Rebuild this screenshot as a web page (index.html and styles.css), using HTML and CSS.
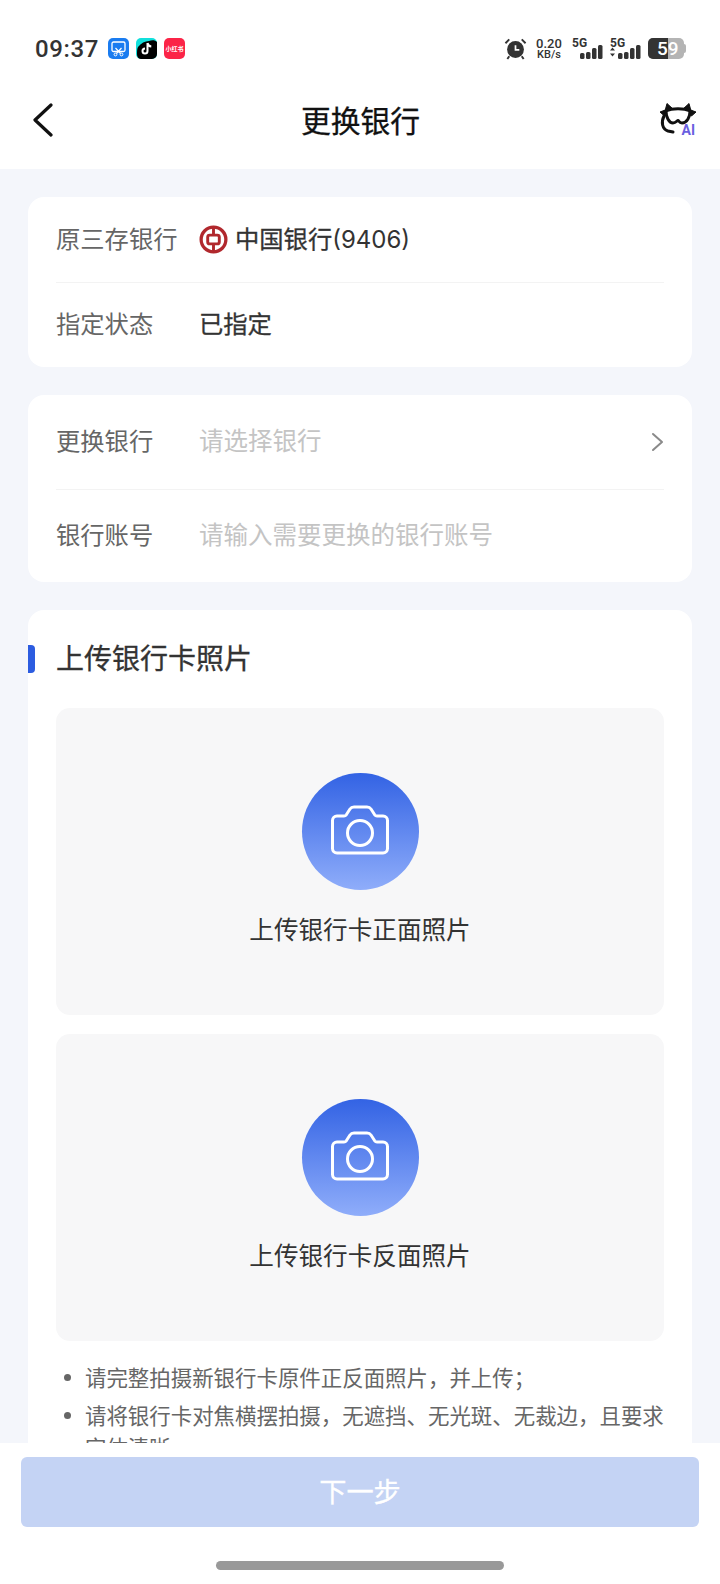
FILE: index.html
```html
<!DOCTYPE html>
<html lang="zh-CN">
<head>
    <meta charset="UTF-8">
    <meta name="viewport" content="width=device-width, initial-scale=1.0">
    <title>更换银行</title>
    <link rel="stylesheet" href="styles.css">
</head>
<body>
<div class="screen">
    <div class="top">
        <div class="status">
            <span class="time">09:37</span>
            <svg class="app" viewBox="0 0 21 21"><rect width="21" height="21" rx="5" fill="#1a7cf0"/><rect x="4" y="4" width="13" height="9.500" rx="1.500" fill="none" stroke="#fff" stroke-width="1.300"/><path d="M7.500 10l5.500 6M13.500 10l-5.500 6" stroke="#fff" stroke-width="1.200"/><circle cx="7.500" cy="16.500" r="1.400" fill="#1a7cf0" stroke="#fff"/><circle cx="13.500" cy="16.500" r="1.400" fill="#1a7cf0" stroke="#fff"/></svg>
            <svg class="app" viewBox="0 0 21 21"><rect width="21" height="21" rx="5" fill="#12e0dc"/><path d="M2 9C5 5 9 3 13 3c3-1 6-1 8 1v12a5 5 0 0 1-5 5H5c-3 0-4-3-4-5 0-3 0-5 1-7z" fill="#000"/><path d="M11.500 5v8a2.500 2.500 0 1 1-2.500-2.500M11.500 5c.3 2 1.700 3.300 3.800 3.500" fill="none" stroke="#fff" stroke-width="2"/></svg>
            <span class="app red">小红书</span>
            <span class="status-right">
                <svg class="alarm" viewBox="0 0 24 24"><circle cx="12" cy="13" r="8.800" fill="#333"/><path d="M12 8.500V13.500H16" fill="none" stroke="#fff" stroke-width="1.800"/><path d="M1.500 6.500L5.500 2.500M22.500 6.500L18.500 2.500M5.500 20L3.500 23M18.500 20L20.500 23" stroke="#333" stroke-width="2"/></svg>
                <span class="speed"><b>0.20</b><i>KB/s</i></span>
                <span class="sig"><em>5G</em>
                    <svg viewBox="0 0 31 14"><rect x="8" y="8" width="4.500" height="6" rx="1.500"/><rect x="14" y="7" width="4.500" height="7" rx="1.500"/><rect x="20" y="3" width="4.500" height="11" rx="1.500"/><rect x="26" y="0" width="4.500" height="14" rx="1.500"/></svg>
                </span>
                <span class="sig"><em>5G</em>
                    <svg viewBox="0 0 31 14"><path d="M0 5.500l2.500-3 2.500 3zM0 8.500h5l-2.500 3z"/><rect x="8" y="8" width="4.500" height="6" rx="1.500"/><rect x="14" y="7" width="4.500" height="7" rx="1.500"/><rect x="20" y="3" width="4.500" height="11" rx="1.500"/><rect x="26" y="0" width="4.500" height="14" rx="1.500"/></svg>
                </span>
                <span class="battery"><span class="battery-fill"></span><span class="battery-num">59</span></span>
            </span>
        </div>
        <div class="nav">
            <svg class="back" viewBox="0 0 20 34"><path d="M18 2L2 17l16 15" fill="none" stroke="#111" stroke-width="3.200" stroke-linecap="round" stroke-linejoin="round"/></svg>
            <h1>更换银行</h1>
            <span class="ai">
                <svg viewBox="0 0 38 32"><path d="M6 9L8 1.500 14 7zM32 9L30 1.500 24 7zM7.500 7.500L1 10l4.500 4zM30.500 7.500L37 10l-4.500 4z" fill="#111" stroke="#111" stroke-linejoin="round"/><path d="M7 9c6-3 18-3 24 0 0 6-3 12-8 12-3 0-3-2.500-4-2.500S17 21 14 21C10 21 7 15 7 9z" fill="none" stroke="#111" stroke-width="3" stroke-linejoin="round"/><path d="M5 14c-3 6-2 13 4 15l5 1" fill="none" stroke="#111" stroke-width="3" stroke-linecap="round"/></svg>
                <span class="ai-text">AI</span>
            </span>
        </div>
    </div>

    <div class="main">
        <div class="card info">
            <div class="row">
                <span class="label">原三存银行</span>
                <span class="bank">
                    <svg class="boc" viewBox="0 0 30 30"><circle cx="15" cy="15" r="12.800" fill="none" stroke="#b1282d" stroke-width="3.400"/><rect x="9" y="10.500" width="12" height="9" rx="2" fill="none" stroke="#b1282d" stroke-width="3"/><path d="M15 3v7M15 20v7" stroke="#b1282d" stroke-width="3"/></svg>
                    中国银行<span class="tail">(9406)</span>
                </span>
            </div>
            <div class="row">
                <span class="label">指定状态</span>
                <span class="value">已指定</span>
            </div>
        </div>

        <div class="card form">
            <div class="row">
                <span class="label">更换银行</span>
                <span class="hint">请选择银行</span>
                <svg class="chev" viewBox="0 0 13 20"><path d="M2 2l9 8-9 8" fill="none" stroke="#8a8a8a" stroke-width="2" stroke-linecap="round" stroke-linejoin="round"/></svg>
            </div>
            <div class="row">
                <span class="label">银行账号</span>
                <span class="hint">请输入需要更换的银行账号</span>
            </div>
        </div>

        <div class="card upload">
            <h2>上传银行卡照片</h2>
            <div class="photo">
                <span class="circle">
                    <svg viewBox="0 0 58 50"><path d="M6 11h7c1 0 1.700-.4 2.300-1.200L19 4c1-1.500 2-2 4-2h13c2 0 3 .5 4 2l3.700 5.800c.6.8 1.300 1.200 2.300 1.200h6c2.500 0 4.500 2 4.500 4.500v28c0 2.500-2 4.500-4.500 4.500H6c-2.500 0-4.500-2-4.500-4.500v-28C1.500 13 3.500 11 6 11z" fill="none" stroke="#fff" stroke-width="3" stroke-linejoin="round"/><circle cx="29" cy="28" r="12.500" fill="none" stroke="#fff" stroke-width="3"/></svg>
                </span>
                <span class="photo-label">上传银行卡正面照片</span>
            </div>
            <div class="photo">
                <span class="circle">
                    <svg viewBox="0 0 58 50"><path d="M6 11h7c1 0 1.700-.4 2.300-1.200L19 4c1-1.500 2-2 4-2h13c2 0 3 .5 4 2l3.700 5.800c.6.8 1.300 1.200 2.300 1.200h6c2.500 0 4.500 2 4.500 4.500v28c0 2.500-2 4.500-4.500 4.500H6c-2.500 0-4.500-2-4.500-4.500v-28C1.500 13 3.500 11 6 11z" fill="none" stroke="#fff" stroke-width="3" stroke-linejoin="round"/><circle cx="29" cy="28" r="12.500" fill="none" stroke="#fff" stroke-width="3"/></svg>
                </span>
                <span class="photo-label">上传银行卡反面照片</span>
            </div>
            <ul class="tips">
                <li>请完整拍摄新银行卡原件正反面照片，并上传；</li>
                <li>请将银行卡对焦横摆拍摄，无遮挡、无光斑、无裁边，且要求字体清晰。</li>
            </ul>
        </div>
    </div>

    <div class="footer">
        <button type="button" class="next">下一步</button>
        <div class="home"></div>
    </div>
</div>
</body>
</html>
```

FILE: styles.css
```css
* {
    box-sizing: border-box;
}
html, body {
    margin: 0;
    padding: 0;
}
body {
    font-family: "Noto Sans CJK SC", "Noto Sans", sans-serif;
    color: #333;
}
.screen {
    display: flex;
    flex-direction: column;
    width: 720px;
    height: 1584px;
    overflow: hidden;
    background: #f4f6fb;
}

/* top */
.top {
    flex: none;
    height: 169px;
    background: #fff;
}
.status {
    display: flex;
    align-items: center;
    height: 97px;
    padding: 0 36px 0 35px;
}
.time {
    font-family: Roboto, sans-serif;
    font-weight: 500;
    font-size: 24px;
    letter-spacing: .6px;
    color: #333;
    margin-right: 9px;
}
.app {
    width: 21px;
    height: 21px;
    margin-right: 7px;
    flex: none;
}
.app.red {
    display: flex;
    align-items: center;
    justify-content: center;
    background: #fb2447;
    border-radius: 5px;
    color: #fff;
    font-size: 6px;
    font-weight: 700;
    white-space: nowrap;
    overflow: hidden;
}
.status-right {
    margin-left: auto;
    display: flex;
    align-items: center;
}
.alarm {
    width: 23px;
    height: 23px;
    margin-right: 9px;
}
.speed {
    display: flex;
    flex-direction: column;
    align-items: center;
    width: 26px;
    margin-right: 10px;
    color: #333;
    font-family: Roboto, sans-serif;
    line-height: 11px;
    white-space: nowrap;
}
.speed b {
    font-size: 13px;
    font-weight: 500;
}
.speed i {
    font-size: 11px;
    font-style: normal;
    font-weight: 500;
}
.sig {
    position: relative;
    display: block;
    width: 31px;
    height: 21px;
    padding-top: 7px;
    margin-right: 7px;
}
.sig em {
    position: absolute;
    left: 0;
    top: -1px;
    font-family: Roboto, sans-serif;
    font-style: normal;
    font-weight: 700;
    font-size: 12px;
    line-height: 12px;
    color: #333;
}
.sig svg {
    display: block;
    width: 31px;
    height: 14px;
    fill: #333;
}
.battery {
    position: relative;
    display: block;
    width: 36px;
    height: 21px;
    border-radius: 5px;
    background: #b4b4b4;
}
.battery::after {
    content: "";
    position: absolute;
    right: -2px;
    top: 6px;
    width: 2px;
    height: 9px;
    border-radius: 0 2px 2px 0;
    background: #b4b4b4;
}
.battery-fill {
    display: block;
    width: 20px;
    height: 21px;
    border-radius: 5px 0 0 5px;
    background: #333;
}
.battery-num {
    position: absolute;
    left: 9px;
    top: 0;
    font-family: Roboto, sans-serif;
    font-size: 19px;
    font-weight: 500;
    line-height: 21px;
    color: #fff;
}
.nav {
    display: grid;
    grid-template-columns: 1fr auto 1fr;
    align-items: center;
    height: 46px;
    padding: 0 23px 0 24px;
}
.back {
    width: 20px;
    height: 34px;
    margin-left: 9px;
}
.nav h1 {
    margin: -2px 0 0;
    font-size: 29.800px;
    font-weight: 400;
    -webkit-text-stroke: .3px #111;
    line-height: 46px;
    color: #111;
}
.ai {
    position: relative;
    display: block;
    justify-self: end;
    width: 38px;
    height: 32px;
    margin-top: -4px;
}
.ai svg {
    display: block;
    width: 38px;
    height: 32px;
}
.ai-text {
    position: absolute;
    right: 2px;
    bottom: -3px;
    font-family: Roboto, sans-serif;
    font-size: 14px;
    font-weight: 700;
    line-height: 14px;
    color: #6a5fe0;
}

/* cards */
.main {
    flex: 1;
    min-height: 0;
    overflow: hidden;
    padding: 28px 28px 0;
}
.card {
    background: #fff;
    border-radius: 16px;
    padding: 0 28px;
    margin-bottom: 28px;
}
.row {
    display: flex;
    align-items: center;
    padding-bottom: 5px;
    font-size: 24.300px;
}
.info .row {
    height: 85px;
}
.form .row {
    height: 93px;
}
.form .row:first-child {
    height: 94px;
}
.row + .row {
    border-top: 1px solid #f3f3f3;
}
.label {
    width: 143px;
    color: #666;
    flex: none;
}
.bank {
    display: flex;
    align-items: center;
    color: #333;
    -webkit-text-stroke: .3px #333;
}
.tail {
    margin-top: 4px;
    font-family: Inter, sans-serif;
    font-size: 24px;
    -webkit-text-stroke: 0;
}
.boc {
    width: 29px;
    height: 29px;
    margin: 5px 7px 0 0;
}
.value {
    color: #333;
    -webkit-text-stroke: .3px #333;
}
.hint {
    font-size: 24.500px;
    color: #c4c4c4;
}
.chev {
    width: 13px;
    height: 20px;
    margin: 5px 0 0 auto;
}

/* upload */
.upload {
    position: relative;
    padding-top: 24px;
    padding-bottom: 40px;
    margin-bottom: 0;
}
.upload::before {
    content: "";
    position: absolute;
    left: 0;
    top: 35px;
    width: 7px;
    height: 28px;
    background: #2c5ce0;
    border-radius: 0 4px 4px 0;
}
.upload h2 {
    margin: 0 0 28px;
    font-size: 28px;
    font-weight: 400;
    -webkit-text-stroke: .3px #333;
    line-height: 46px;
    color: #333;
}
.photo {
    display: flex;
    flex-direction: column;
    align-items: center;
    height: 307px;
    margin-bottom: 19px;
    padding-top: 65px;
    background: #f7f7f8;
    border-radius: 14px;
}
.circle {
    display: flex;
    align-items: center;
    justify-content: center;
    width: 117px;
    height: 117px;
    border-radius: 50%;
    background: linear-gradient(#3363e4, #8fadfa);
}
.circle svg {
    width: 58px;
    height: 50px;
    margin-top: -3px;
}
.photo-label {
    margin-top: 21px;
    font-size: 24.600px;
    line-height: 34px;
    color: #333;
}
.tips {
    list-style: none;
    margin: 0;
    padding: 1px 0 0;
    font-size: 21.450px;
    line-height: 32px;
    color: #666;
}
.tips li {
    position: relative;
    padding-left: 29px;
    margin-bottom: 6px;
}
.tips li::before {
    content: "";
    position: absolute;
    left: 8px;
    top: 13px;
    width: 7px;
    height: 7px;
    border-radius: 50%;
    background: #666;
}

/* footer */
.footer {
    flex: none;
    height: 141px;
    padding: 14px 21px 0;
    background: #fff;
}
.next {
    display: block;
    width: 678px;
    height: 70px;
    padding: 0 0 4px;
    border: 0;
    border-radius: 6px;
    background: #c4d3f4;
    color: #fff;
    font-family: inherit;
    font-size: 27.200px;
    font-weight: 400;
    -webkit-text-stroke: .3px #fff;
}
.home {
    width: 288px;
    height: 9px;
    margin: 34px auto 0;
    border-radius: 5px;
    background: #999;
}
```
